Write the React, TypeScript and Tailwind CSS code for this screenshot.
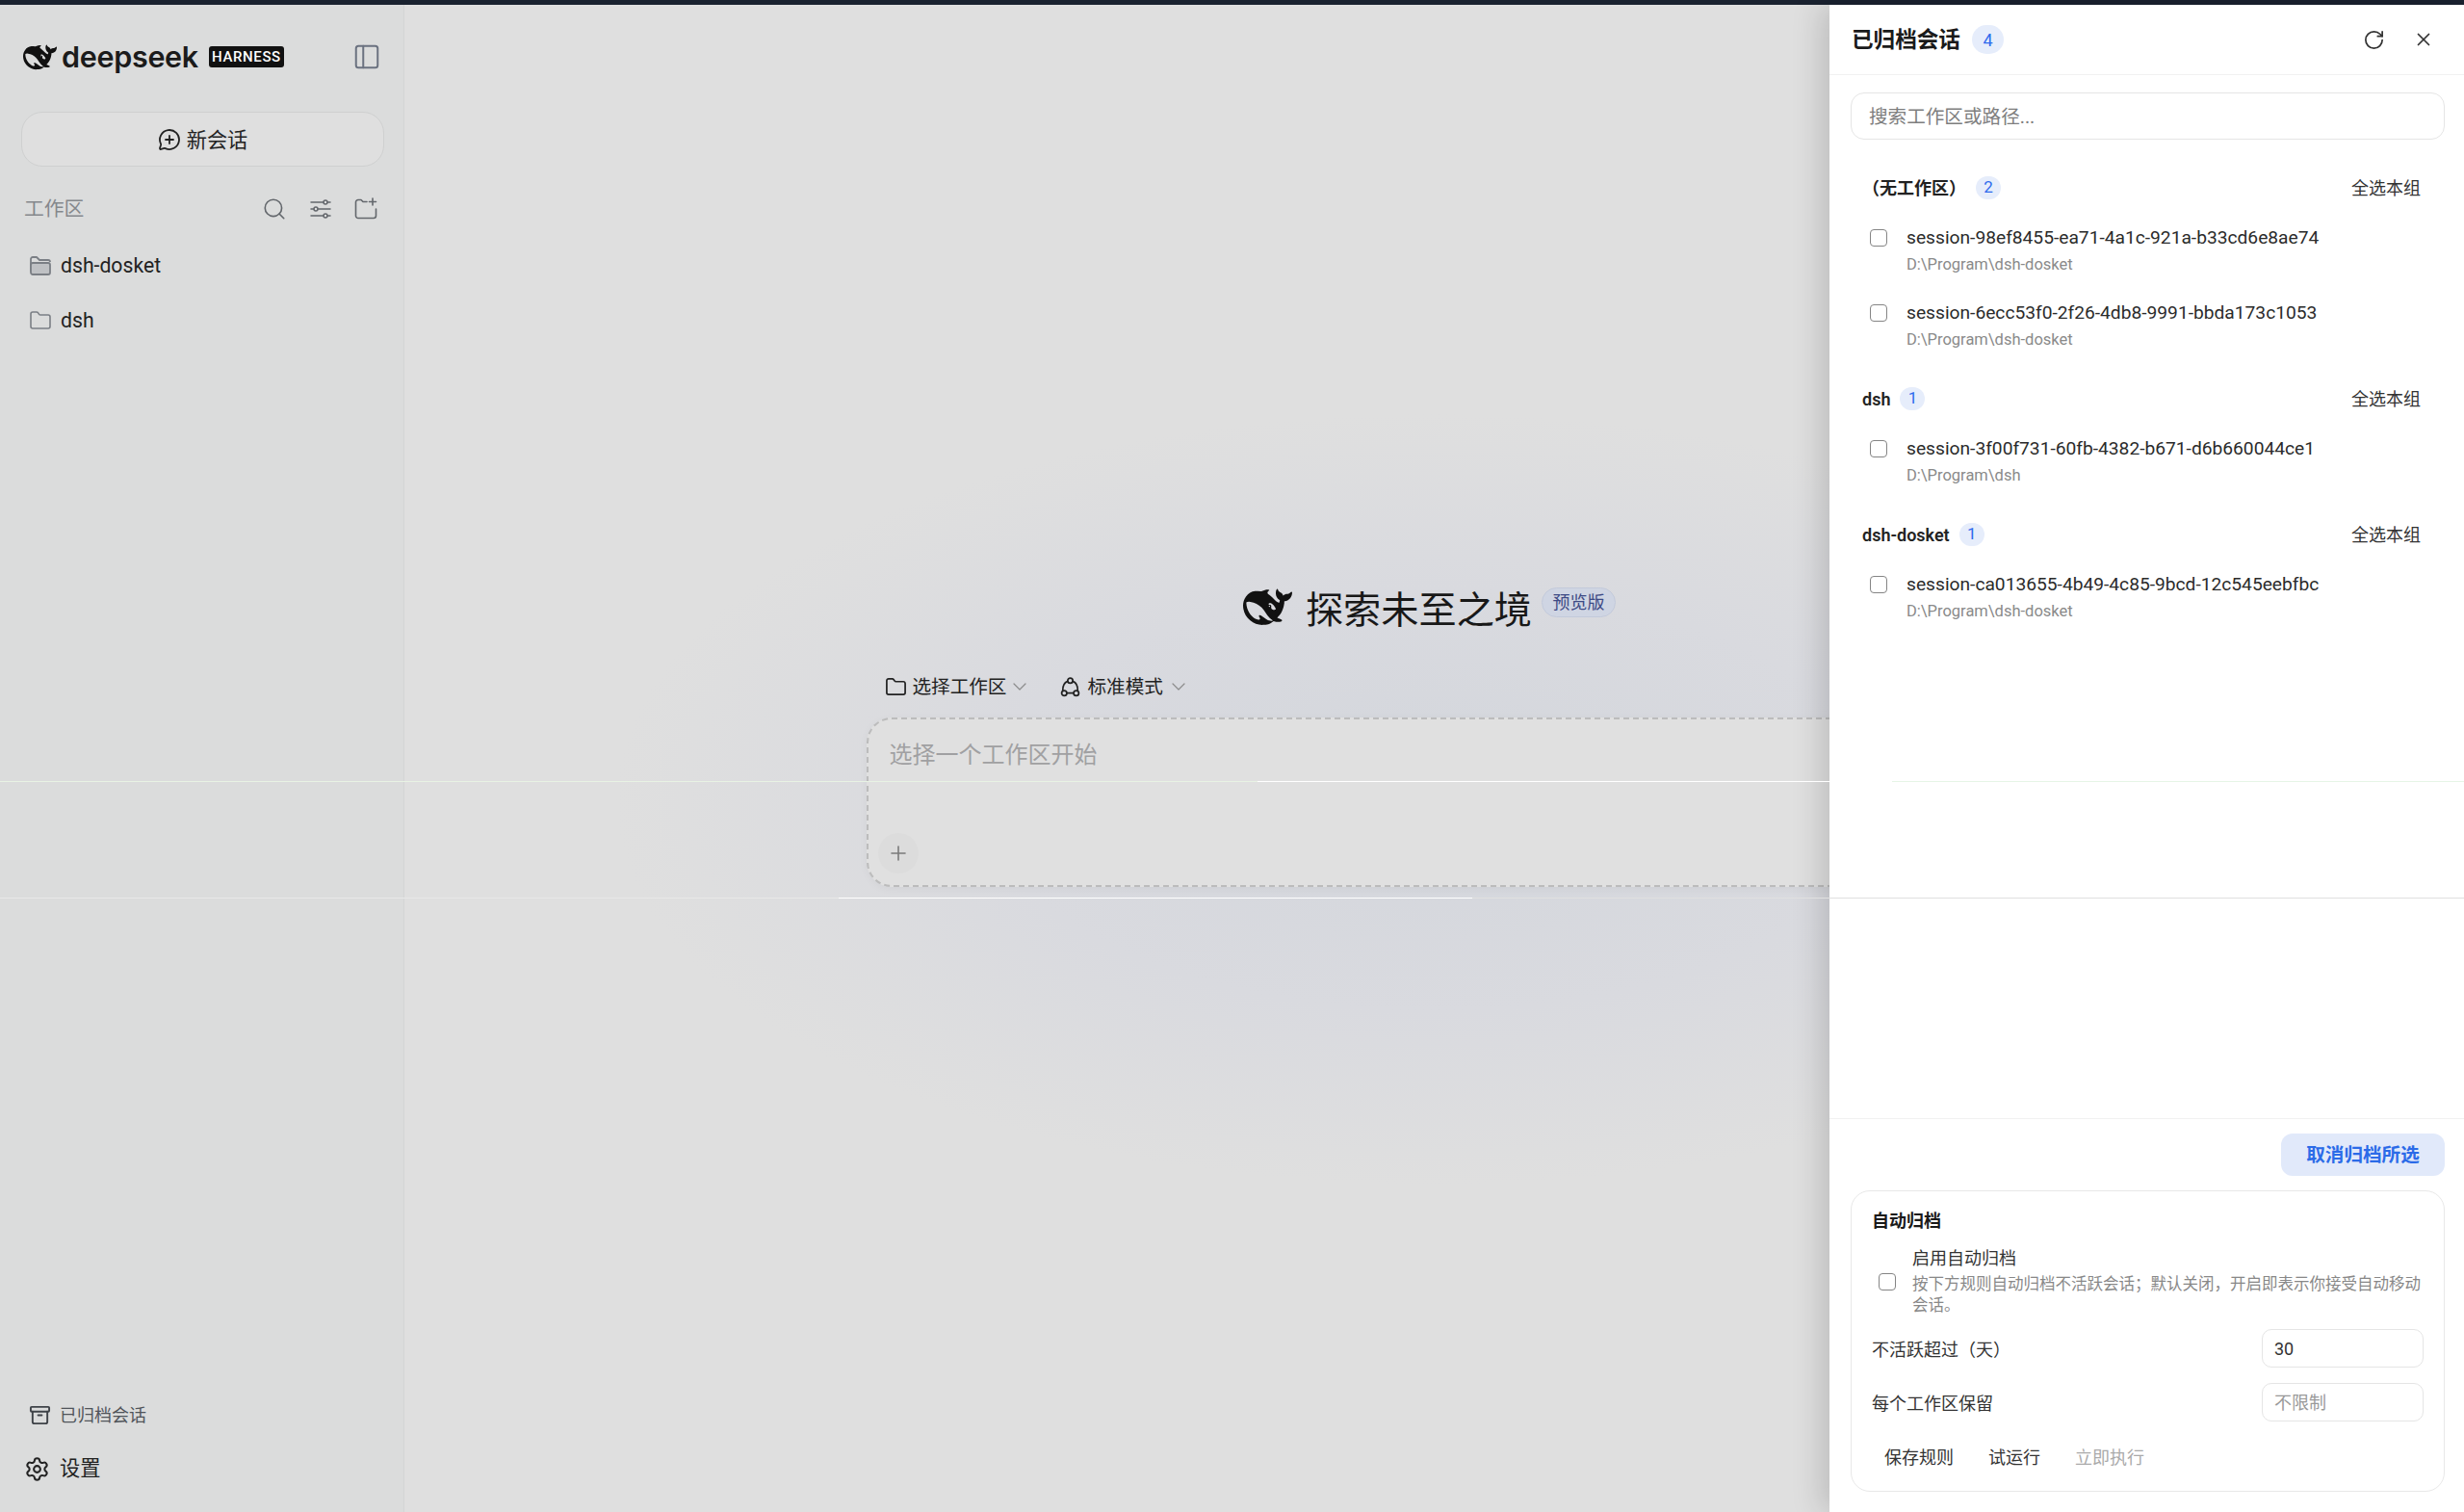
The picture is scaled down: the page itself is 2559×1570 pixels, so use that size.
import type React from "react"
import { Archive, ChevronDown, Folder, MessageCirclePlus, PanelLeft, Plus, RotateCw, Search, Settings, X } from "lucide-react"

function Whale({ className }: { className?: string }) {
  return (
    <svg viewBox="0 0 24 24" className={className} fill="currentColor" fillRule="evenodd">
      <path d="M23.748 4.482c-.254-.124-.364.113-.512.234-.051.039-.094.09-.137.136-.372.397-.806.657-1.373.626-.829-.046-1.537.214-2.163.848-.133-.782-.575-1.248-1.247-1.548-.352-.156-.708-.311-.955-.65-.172-.241-.219-.51-.305-.774-.055-.16-.11-.323-.293-.35-.2-.031-.278.136-.356.276-.313.572-.434 1.202-.422 1.84.027 1.436.633 2.58 1.838 3.393.137.093.172.187.129.323-.082.28-.18.552-.266.833-.055.179-.137.217-.329.14a5.526 5.526 0 01-1.736-1.18c-.857-.828-1.631-1.742-2.597-2.458a11.365 11.365 0 00-.689-.471c-.985-.957.13-1.743.388-1.836.27-.098.093-.432-.779-.428-.872.004-1.67.295-2.687.684a3.055 3.055 0 01-.465.137 9.597 9.597 0 00-2.883-.102c-1.885.21-3.39 1.102-4.497 2.623C.082 8.606-.231 10.684.152 12.85c.403 2.284 1.569 4.175 3.36 5.653 1.858 1.533 3.997 2.284 6.438 2.14 1.482-.085 3.133-.284 4.994-1.86.47.234.962.327 1.78.397.63.059 1.236-.03 1.705-.128.735-.156.684-.837.419-.961-2.155-1.004-1.682-.595-2.113-.926 1.096-1.296 2.746-2.642 3.392-7.003.05-.347.007-.565 0-.845-.004-.17.035-.237.23-.256a4.173 4.173 0 001.545-.475c1.396-.763 1.96-2.015 2.093-3.517.02-.23-.004-.467-.247-.588zM11.581 18c-2.089-1.642-3.102-2.183-3.52-2.16-.392.024-.321.471-.235.763.09.288.207.486.371.739.114.167.192.416-.113.603-.673.416-1.842-.14-1.897-.167-1.361-.802-2.5-1.86-3.301-3.307-.774-1.393-1.224-2.887-1.298-4.482-.02-.386.093-.522.477-.592a4.696 4.696 0 011.529-.039c2.132.312 3.946 1.265 5.468 2.774.868.86 1.525 1.887 2.202 2.891.72 1.066 1.494 2.082 2.48 2.914.348.292.625.514.891.677-.802.09-2.14.11-3.054-.614zm1-6.44a.306.306 0 01.415-.287.302.302 0 01.2.288.306.306 0 01-.31.307.303.303 0 01-.304-.308zm3.11 1.596c-.2.081-.399.151-.59.16a1.245 1.245 0 01-.798-.254c-.274-.23-.47-.358-.552-.758a1.73 1.73 0 01.016-.588c.07-.327-.008-.537-.239-.727-.187-.156-.426-.199-.688-.199a.559.559 0 01-.254-.078c-.11-.054-.2-.19-.114-.358.028-.054.16-.186.192-.21.356-.202.767-.136 1.146.016.352.144.618.408 1.001.782.391.451.462.576.685.914.176.265.336.537.445.848.067.195-.019.354-.25.452z" />
    </svg>
  )
}

function Check() {
  return <span className="block w-[18px] h-[18px] shrink-0 rounded-[4px] border-[1.5px] border-[#858585] bg-white" />
}

function CountBadge({ n, big }: { n: number; big?: boolean }) {
  return (
    <span className={`flex items-center justify-center rounded-full bg-[#e6edfb] text-[#2f6bed] ${big ? "w-[33px] h-[30px] text-[18px]" : "w-[26px] h-[24px] text-[17px]"}`}>
      {n}
    </span>
  )
}

function SessionRow({ name, path }: { name: string; path: string }) {
  return (
    <div className="flex items-start pl-[20px] gap-[20px] h-[56px]">
      <div className="h-[28px] flex items-center"><Check /></div>
      <div>
        <div className="h-[28px] leading-[28px] text-[19.2px] text-[#2b2b2b]">{name}</div>
        <div className="h-[28px] leading-[28px] text-[16.5px] text-[#8a8a8a]">{path}</div>
      </div>
    </div>
  )
}

function Group({ title, count, children, className }: { title: string; count: number; children: React.ReactNode; className?: string }) {
  return (
    <div className={className}>
      <div className="flex items-center justify-between pl-[12px] pr-[25px] h-[28px]">
        <div className="flex items-center gap-[10px]">
          <span className="text-[18px] font-semibold text-[#222]">{title}</span>
          <CountBadge n={count} />
        </div>
        <span className="text-[18px] text-[#333]">全选本组</span>
      </div>
      <div className="mt-[24px] flex flex-col gap-[22px]">{children}</div>
    </div>
  )
}

function ArchiveDrawer() {
  return (
    <aside className="absolute top-[5px] right-0 bottom-0 w-[659px] bg-white flex flex-col shadow-[-8px_0_30px_rgba(0,0,0,0.16)]">
      <header className="h-[73px] shrink-0 border-b border-[#f1f1f1] flex items-center pl-[23px] pr-[31px]">
        <h2 className="pt-[2px] text-[22.6px] font-bold text-[#1a1a1a]">已归档会话</h2>
        <span className="ml-[12px]"><CountBadge n={4} big /></span>
        <div className="ml-auto flex items-center gap-[29px] text-[#333]">
          <RotateCw size={23} strokeWidth={1.8} />
          <X size={22} strokeWidth={1.9} />
        </div>
      </header>
      <div className="ml-[22px] mr-[20px] mt-[18px] h-[49px] rounded-[14px] border border-[#e5e5e5] flex items-center pl-[18px] pt-[3px] text-[19.6px] text-[#7e7e7e] shrink-0">
        搜索工作区或路径...
      </div>
      <div className="ml-[22px] mr-[20px] mt-[36px] flex-1">
        <Group title="（无工作区）" count={2}>
          <SessionRow name="session-98ef8455-ea71-4a1c-921a-b33cd6e8ae74" path="D:\Program\dsh-dosket" />
          <SessionRow name="session-6ecc53f0-2f26-4db8-9991-bbda173c1053" path="D:\Program\dsh-dosket" />
        </Group>
        <Group title="dsh" count={1} className="mt-[33px]">
          <SessionRow name="session-3f00f731-60fb-4382-b671-d6b660044ce1" path="D:\Program\dsh" />
        </Group>
        <Group title="dsh-dosket" count={1} className="mt-[33px]">
          <SessionRow name="session-ca013655-4b49-4c85-9bcd-12c545eebfbc" path="D:\Program\dsh-dosket" />
        </Group>
      </div>
      <div className="h-[409px] shrink-0 border-t border-[#f1f1f1] pl-[22px] pr-[20px] pt-[15px]">
        <div className="flex justify-end">
          <button className="w-[170px] h-[44px] pt-[2px] rounded-[12px] bg-[#e1e9fa] text-[#2b6be8] text-[19.6px] font-bold">取消归档所选</button>
        </div>
        <div className="mt-[15px] h-[313px] rounded-[20px] border border-[#e8e8e8] pl-[21px] pr-[21px] pt-[16px]">
          <div className="text-[18px] font-bold text-[#1a1a1a] leading-[30px]">自动归档</div>
          <div className="mt-[12px] flex items-center gap-[17px] pl-[7px]">
            <Check />
            <div>
              <div className="text-[18px] leading-[24px] text-[#333] mb-[4px]">启用自动归档</div>
              <div className="text-[16.5px] leading-[22px] text-[#888]">按下方规则自动归档不活跃会话；默认关闭，开启即表示你接受自动移动会话。</div>
            </div>
          </div>
          <div className="mt-[13px] flex items-center justify-between h-[40px]">
            <span className="pt-[2px] text-[18px] text-[#333]">不活跃超过（天）</span>
            <div className="w-[168px] h-[40px] rounded-[10px] border border-[#e5e5e5] flex items-center pl-[12px] text-[18px] text-[#333]">30</div>
          </div>
          <div className="mt-[16px] flex items-center justify-between h-[40px]">
            <span className="pt-[2px] text-[18px] text-[#333]">每个工作区保留</span>
            <div className="w-[168px] h-[40px] rounded-[10px] border border-[#e5e5e5] flex items-center pl-[12px] text-[18px] text-[#999]">不限制</div>
          </div>
          <div className="mt-[22px] h-[30px] flex items-center pl-[13px] gap-[36px] text-[18px] text-[#333]">
            <span>保存规则</span>
            <span>试运行</span>
            <span className="text-[#aaa]">立即执行</span>
          </div>
        </div>
      </div>
    </aside>
  )
}

function Sidebar() {
  return (
    <aside className="w-[420px] shrink-0 bg-[#dbdcdc] border-r border-[#d4d5d5] flex flex-col">
      <div className="flex items-center h-[52px] mt-[28px] pl-[24px] pr-[23px]">
        <Whale className="w-[35px] h-[35px] text-[#111]" />
        <span className="ml-[5px] text-[30.5px] font-semibold leading-none text-[#1b1b1b] font-['Inter',sans-serif] tracking-[-0.3px]">deepseek</span>
        <span className="ml-[11px] w-[78px] h-[22px] pt-px rounded-[3px] bg-[#111] text-white text-[15px] font-medium tracking-[0.6px] flex items-center justify-center">HARNESS</span>
        <PanelLeft size={30} strokeWidth={1.6} className="ml-auto text-[#6b7280]" />
      </div>
      <button className="ml-[22px] mr-[20px] mt-[31px] h-[57px] rounded-[22px] bg-[#dfdfdf] border border-[#cfd0d0] flex items-center justify-center gap-[6px] text-[21.2px] text-[#222]">
        <MessageCirclePlus size={24} strokeWidth={1.8} />
        <span className="pt-[2px]">新会话</span>
      </button>
      <div className="flex items-center mt-[29px] pl-[25px] pr-[24px] h-[30px]">
        <span className="pt-[2px] text-[20.8px] text-[#85888c]">工作区</span>
        <div className="ml-auto flex items-center gap-[17.5px] text-[#63676c]">
          <div className="w-[30px] flex justify-center"><Search size={26} strokeWidth={1.5} /></div>
          <div className="w-[30px] flex justify-center">
            <svg viewBox="0 0 24 24" className="w-[24px] h-[24px]" fill="none" stroke="currentColor" strokeWidth="1.5" strokeLinecap="round">
              <path d="M2 5h13M19 5h3M2 12h3M9 12h13M2 19h13M19 19h3" />
              <circle cx="17" cy="5" r="2" />
              <circle cx="7" cy="12" r="2" />
              <circle cx="17" cy="19" r="2" />
            </svg>
          </div>
          <div className="w-[30px] flex justify-center">
            <svg viewBox="0 0 24 24" className="w-[24px] h-[24px]" fill="none" stroke="currentColor" strokeWidth="1.6" strokeLinecap="round" strokeLinejoin="round">
              <path d="M13 4.5H9l-2-2H4A2.5 2.5 0 0 0 1.5 5v14A2.5 2.5 0 0 0 4 21.5h16a2.5 2.5 0 0 0 2.5-2.5v-7" />
              <path d="M19 1v7M15.5 4.5h7" />
            </svg>
          </div>
        </div>
      </div>
      <div className="mt-[29px] pl-[30px] flex flex-col gap-[27px] text-[21.2px] text-[#222]">
        <div className="flex items-center gap-[9px] h-[30px]">
          <svg viewBox="0 0 24 24" className="w-[24px] h-[24px] text-[#7b7f85]" stroke="currentColor" strokeWidth="1.8" strokeLinejoin="round" fill="none">
            <path d="M2 18V5a2 2 0 0 1 2-2h4l3 3h9a2 2 0 0 1 2 2" />
            <path d="M2 11a2 2 0 0 1 2-2h16a2 2 0 0 1 2 2v8a2 2 0 0 1-2 2H4a2 2 0 0 1-2-2z" fill="#bfc1c4" />
          </svg>
          dsh-dosket
        </div>
        <div className="flex items-center gap-[9px] h-[30px]">
          <Folder size={24} strokeWidth={1.6} className="text-[#7b7f85]" />
          dsh
        </div>
      </div>
      <div className="mt-auto pb-[30px] flex flex-col">
        <div className="flex items-center gap-[9px] pl-[30px] h-[30px] text-[18px] text-[#50545a]">
          <Archive size={23} strokeWidth={2} className="text-[#3f4348]" />
          已归档会话
        </div>
        <div className="flex items-center gap-[10px] pl-[25px] h-[30px] mt-[26px] text-[21.2px] text-[#222]">
          <Settings size={27} strokeWidth={1.8} />
          设置
        </div>
      </div>
    </aside>
  )
}

function Composer() {
  return (
    <main className="flex-1 bg-[radial-gradient(ellipse_850px_400px_at_1069px_825px,#d3d6dc_0%,#d9dadf_55%,#dfdfdf_100%)] flex flex-col items-center pt-[600px]">
      <div className="flex items-start h-[56px] pr-[10px]">
        <Whale className="w-[51px] h-[51px] text-[#111]" />
        <span className="ml-[14px] text-[39.2px] leading-[58px] text-[#181818]">探索未至之境</span>
        <span className="ml-[10px] mt-[5px] w-[77px] h-[31px] rounded-full bg-[#cfd5e3] border border-[#c3cadb] text-[18px] text-[#3d4a85] flex items-center justify-center">预览版</span>
      </div>
      <div className="w-[1180px] mt-[37px] pl-[19px] flex items-center h-[30px] text-[19.6px] text-[#222]">
        <Folder size={23} strokeWidth={1.8} />
        <span className="ml-[6px] pt-[2px]">选择工作区</span>
        <ChevronDown size={24} strokeWidth={1.2} className="ml-[2px] text-[#8c8c8c]" />
        <svg viewBox="0 0 24 24" className="ml-[29px] w-[23px] h-[23px]" fill="none" stroke="currentColor" strokeWidth="1.8" strokeLinecap="round">
          <circle cx="12" cy="5" r="2.8" />
          <circle cx="5.5" cy="18.5" r="2.8" />
          <circle cx="18.5" cy="18.5" r="2.8" />
          <path d="M9.2 5.6C6 7 3.7 10.5 3.9 15.7M14.8 5.6C18 7 20.3 10.5 20.1 15.7M8.3 18.5h7.4" />
        </svg>
        <span className="ml-[6px] pt-[2px]">标准模式</span>
        <ChevronDown size={24} strokeWidth={1.2} className="ml-[4px] text-[#8c8c8c]" />
      </div>
      <div className="w-[1180px] h-[176px] mt-[17px] rounded-[26px] border-2 border-dashed border-[#bcbcbc] bg-[#e0e0e0] flex flex-col justify-between pl-[10px] pb-[12px] shadow-[0_2px_10px_rgba(0,0,0,0.04)]">
        <div className="pl-[12px] pt-[19px] text-[24px] text-[#a0a0a2]">选择一个工作区开始</div>
        <div className="w-[42px] h-[42px] rounded-full bg-[#dcdcdc] flex items-center justify-center text-[#7a7a7a]">
          <Plus size={24} strokeWidth={1.6} />
        </div>
      </div>
    </main>
  )
}

// 1px render seams in the capture, they sit over everything
function Seams() {
  return (
    <>
      <div className="absolute left-0 right-0 top-[811px] h-px flex">
        <div className="w-[1306px] bg-[#e8f3e4]" />
        <div className="w-[594px] bg-white" />
        <div className="w-[65px]" />
        <div className="flex-1 bg-[#e6f5e6]" />
      </div>
      <div className="absolute left-0 right-0 top-[932px] h-px flex">
        <div className="w-[871px] bg-[#e8e8e8]" />
        <div className="w-[658px] bg-white" />
        <div className="flex-1 bg-[#e0e0e0]" />
      </div>
    </>
  )
}

export default function App() {
  return (
    <div className="relative w-[2559px] h-[1570px] overflow-hidden flex flex-col bg-[#dfdfdf] font-['Roboto','Noto_Sans_CJK_SC',sans-serif]">
      <div className="h-[5px] shrink-0 bg-[#1a2230]" />
      <div className="flex flex-1 min-h-0">
        <Sidebar />
        <Composer />
      </div>
      <ArchiveDrawer />
      <Seams />
    </div>
  )
}
